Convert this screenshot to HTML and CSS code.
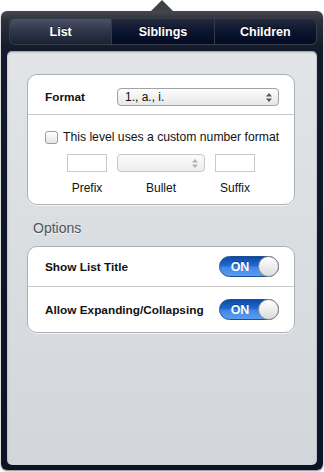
FILE: index.html
```html
<!DOCTYPE html>
<html lang="en">
<head>
    <meta charset="UTF-8">
    <meta name="viewport" content="width=device-width, initial-scale=1.0">
    <title>List Format</title>
    <link rel="stylesheet" href="styles.css">
</head>
<body>

    <div class="popover">
        <div class="arrow-row"><div class="arrow"></div></div>

        <div class="frame">
            <!-- Top segmented control -->
            <div class="tabs">
                <div class="tab selected">List</div>
                <div class="tab">Siblings</div>
                <div class="tab">Children</div>
            </div>

            <div class="content">
                <div class="card">
                    <div class="row format-row">
                        <span class="label">Format</span>
                        <div class="select">
                            <span>1., a., i.</span>
                            <svg class="updown" width="6" height="9" viewBox="0 0 6 9"><path d="M3 0 L6 3.5 L0 3.5 Z M0 5.5 L6 5.5 L3 9 Z" fill="#555"/></svg>
                        </div>
                    </div>
                    <div class="custom">
                        <label class="check-line">
                            <span class="checkbox"></span>
                            This level uses a custom number format
                        </label>
                        <div class="fields">
                            <div class="field">
                                <div class="text-box"></div>
                                <span>Prefix</span>
                            </div>
                            <div class="field">
                                <div class="select small">
                                    <svg class="updown" width="6" height="9" viewBox="0 0 6 9"><path d="M3 0 L6 3.5 L0 3.5 Z M0 5.5 L6 5.5 L3 9 Z" fill="#b0b0b0"/></svg>
                                </div>
                                <span>Bullet</span>
                            </div>
                            <div class="field">
                                <div class="text-box"></div>
                                <span>Suffix</span>
                            </div>
                        </div>
                    </div>
                </div>

                <div class="section-title">Options</div>

                <div class="card">
                    <div class="row option-row first">
                        <span class="label">Show List Title</span>
                        <div class="switch"><span>ON</span><i class="knob"></i></div>
                    </div>
                    <div class="row option-row">
                        <span class="label">Allow Expanding/Collapsing</span>
                        <div class="switch"><span>ON</span><i class="knob"></i></div>
                    </div>
                </div>
            </div>
        </div>
    </div>

</body>
</html>
```

FILE: styles.css
```css
body {
    margin: 0;
    padding: 0;
    background-color: #ffffff;
    font-family: "Liberation Sans", Arial, sans-serif;
    width: 324px;
    height: 472px;
}

.arrow-row {
    height: 11px;
    display: flex;
    justify-content: center;
}

.arrow {
    width: 0;
    height: 0;
    border-left: 11px solid transparent;
    border-right: 11px solid transparent;
    border-bottom: 11px solid #404247;
}

.frame {
    margin: 0 1px;
    height: 459px;
    box-sizing: border-box;
    padding: 8px 6px 5px 6px;
    border-radius: 6px;
    background: linear-gradient(to bottom, #45484e 0px, #2c303a 10px, #121a2b 38px, #0a1426 100%);
    box-shadow: 0 1px 2px rgba(0, 0, 0, 0.5);
}

.tabs {
    display: flex;
    height: 25px;
    margin: 0 1px 7px 3px;
    border-radius: 5px;
    overflow: hidden;
    box-shadow: 0 0 0 1px #383d4a;
}

.tab {
    flex: 1;
    display: flex;
    align-items: center;
    justify-content: center;
    color: #ffffff;
    font-weight: bold;
    font-size: 12.5px;
    text-shadow: 0 -1px 0 rgba(0, 0, 0, 0.6);
    background: linear-gradient(to bottom, #232a3e 0%, #0c1530 50%, #020b22 100%);
    border-left: 1px solid #343948;
}

.tab.selected {
    border-left: none;
    background: linear-gradient(to bottom, #4a5165 0%, #2e3549 50%, #1b2236 100%);
}

.content {
    height: 414px;
    box-sizing: border-box;
    padding: 23px 22px 0 20px;
    border-radius: 5px;
    background: linear-gradient(to bottom, #e2e4e7, #d2d6da);
    box-shadow: inset 0 1px 2px rgba(0, 0, 0, 0.35);
}

.card {
    background-color: #ffffff;
    border: 1px solid #acafb3;
    border-radius: 10px;
    box-shadow: 0 1px 0 rgba(255, 255, 255, 0.7);
}

.row {
    display: flex;
    align-items: center;
    justify-content: space-between;
    padding: 0 15px 0 17px;
}

.label {
    font-weight: bold;
    font-size: 11.8px;
    color: #111111;
}

.format-row {
    box-sizing: border-box;
    height: 40px;
    padding-top: 5px;
    border-bottom: 1px solid #c9c9c9;
}

.select {
    width: 162px;
    height: 18px;
    box-sizing: border-box;
    border: 1px solid #a2a2a2;
    border-radius: 4px;
    background: linear-gradient(to bottom, #fdfdfd, #e7e7e7);
    display: flex;
    align-items: center;
    justify-content: space-between;
    padding: 0 6px 0 7px;
    font-size: 12px;
    color: #111111;
}

.select.small {
    width: 88px;
    border-color: #c6c6c6;
    background: linear-gradient(to bottom, #fbfbfb, #ededed);
    justify-content: flex-end;
}

.custom {
    padding: 15px 0 9px 17px;
}

.check-line {
    display: flex;
    align-items: center;
    font-size: 12.2px;
    color: #111111;
    height: 14px;
}

.checkbox {
    width: 13px;
    height: 13px;
    box-sizing: border-box;
    border: 1px solid #9c9c9c;
    border-radius: 3px;
    background: linear-gradient(to bottom, #ffffff, #e4e4e4);
    margin-right: 5px;
}

.fields {
    display: grid;
    grid-template-columns: 40px 88px 40px;
    column-gap: 10px;
    margin: 10px 0 0 22px;
}

.field {
    display: flex;
    flex-direction: column;
    align-items: center;
}

.field span {
    font-size: 12px;
    color: #111111;
    margin-top: 9px;
    line-height: 14px;
}

.text-box {
    width: 40px;
    height: 18px;
    box-sizing: border-box;
    border: 1px solid #cacaca;
    background: #ffffff;
}

.section-title {
    font-size: 14px;
    color: #4e5460;
    line-height: 16px;
    margin: 15px 0 10px 6px;
    text-shadow: 0 1px 0 rgba(255, 255, 255, 0.7);
}

.option-row {
    height: 45px;
}

.option-row.first {
    height: 39px;
    border-bottom: 1px solid #c9c9c9;
}

.switch {
    width: 60px;
    height: 21px;
    box-sizing: border-box;
    border: 1px solid #1d4d93;
    border-radius: 11px;
    background: linear-gradient(to bottom, #0c4aa6 0%, #2169d2 45%, #3f88ea 55%, #5b9cf0 100%);
    display: flex;
    align-items: center;
}

.switch span {
    flex: 1;
    text-align: center;
    color: #ffffff;
    font-weight: bold;
    font-size: 12.5px;
    padding-left: 2px;
    text-shadow: 0 -1px 0 rgba(0, 0, 0, 0.3);
}

.knob {
    width: 21px;
    height: 21px;
    box-sizing: border-box;
    margin-right: -1px;
    border: 1px solid #8d8d8d;
    border-radius: 50%;
    background: linear-gradient(to bottom, #ffffff, #dcdcdc);
}
```
